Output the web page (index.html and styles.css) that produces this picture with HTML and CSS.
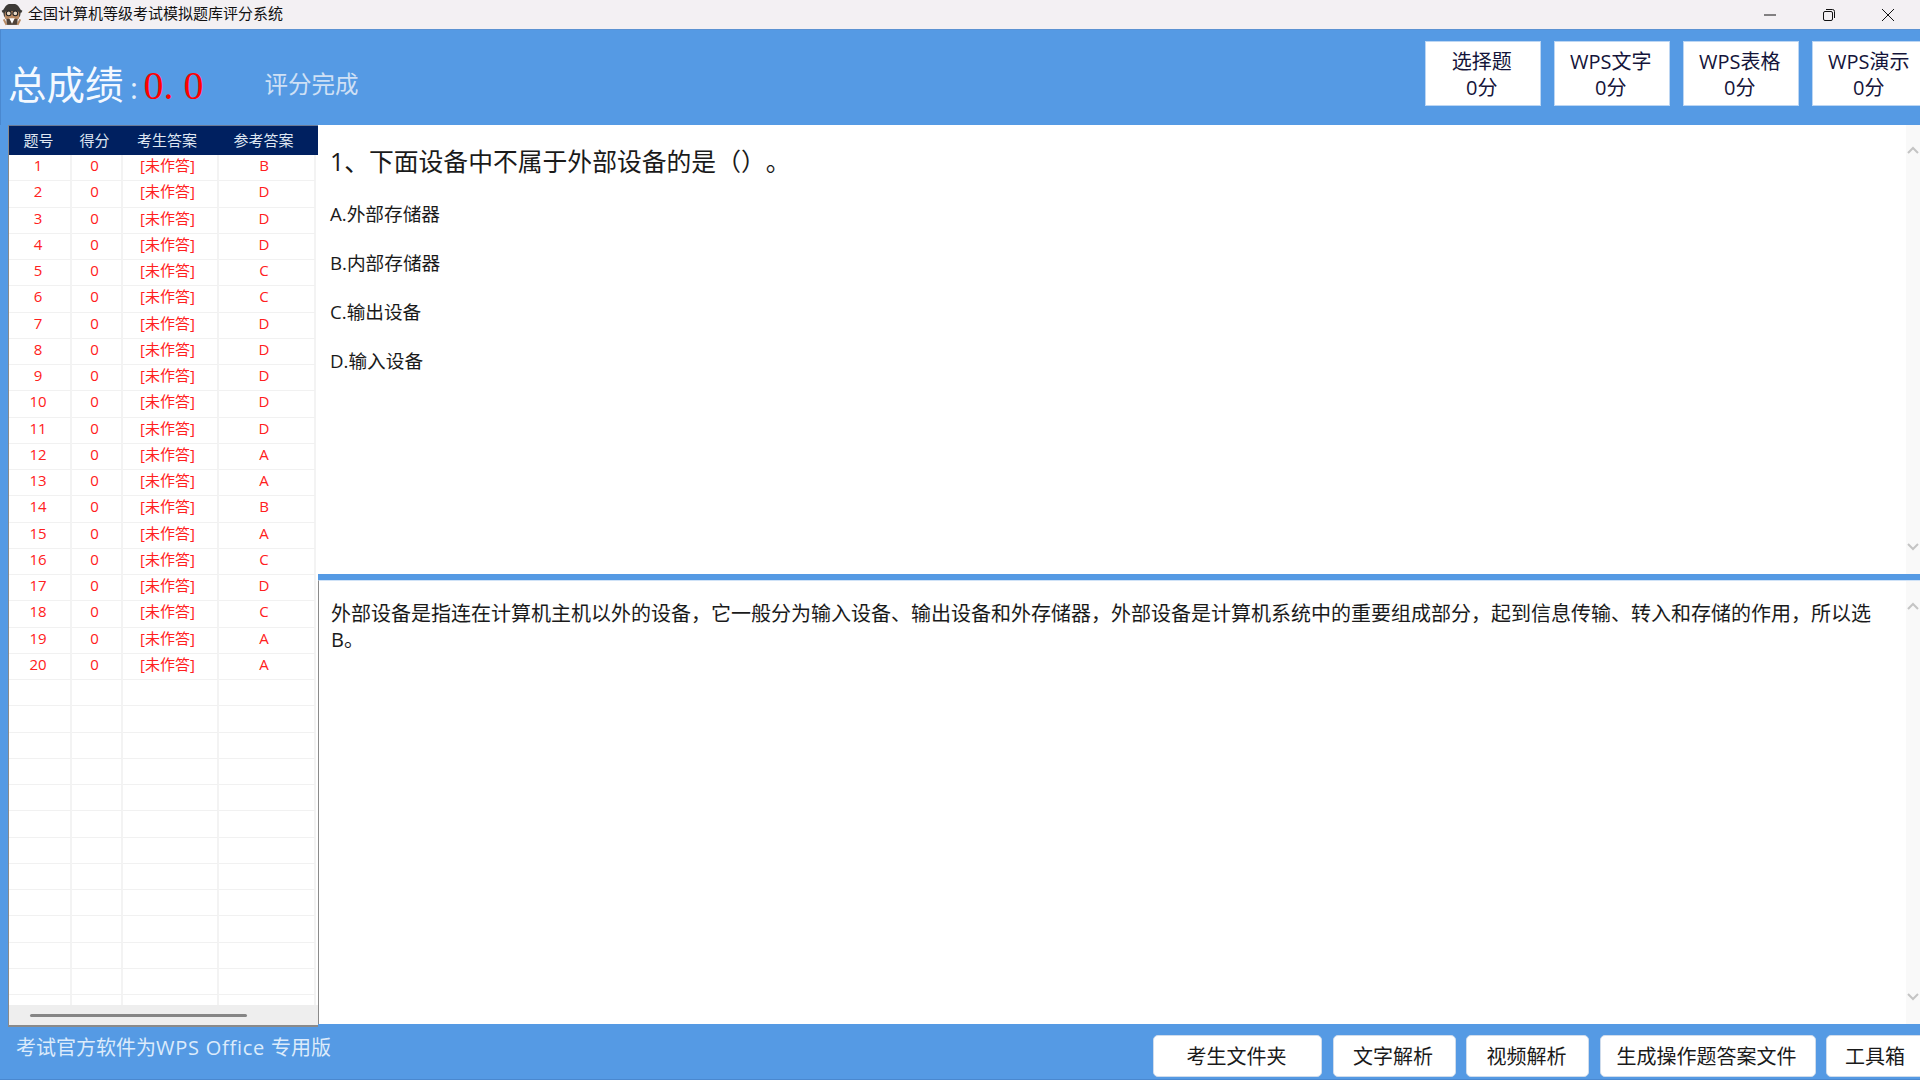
FILE: index.html
```html
<!DOCTYPE html>
<html lang="zh-CN">
<head>
<meta charset="utf-8">
<title>全国计算机等级考试模拟题库评分系统</title>
<link rel="stylesheet" href="styles.css">
</head>
<body>
<div class="window">
  <div class="titlebar">
    <svg class="app-icon" viewBox="0 0 20 20" width="22" height="22">
      <circle cx="10" cy="7.5" r="8" fill="#3d3a36"/>
      <path d="M1 7l2-1M19 7l-2-1" stroke="#3d3a36" stroke-width="2"/>
      <rect x="3.5" y="6.5" width="13" height="7.5" rx="2" fill="#b98a62"/>
      <circle cx="7" cy="8.5" r="2.2" fill="#e8d8c4" stroke="#222" stroke-width="1"/>
      <circle cx="13" cy="8.5" r="2.2" fill="#e8d8c4" stroke="#222" stroke-width="1"/>
      <path d="M5 13.5h10V19H5z" fill="#4f4237"/>
      <path d="M7.5 13l2.5 5 2.5-5z" fill="#fff"/>
      <path d="M2.5 14l2.5 5M17.5 14L15 19" stroke="#b98a62" stroke-width="1.8"/>
    </svg>
    <span class="app-title">全国计算机等级考试模拟题库评分系统</span>
    <div class="win-controls">
      <svg viewBox="0 0 14 14" width="14" height="14"><path d="M1 7h12" stroke="#111" stroke-width="1" fill="none"/></svg>
      <svg viewBox="0 0 14 14" width="14" height="14"><rect x="1.5" y="3.5" width="9" height="9" rx="1.5" stroke="#111" fill="none"/><path d="M4 1.5h6.5a2 2 0 0 1 2 2V10" stroke="#111" fill="none"/></svg>
      <svg viewBox="0 0 14 14" width="14" height="14"><path d="M1 1l12 12M13 1L1 13" stroke="#111" stroke-width="1" fill="none"/></svg>
    </div>
  </div>

  <header class="topbar">
    <div class="score">
      <span class="score-label">总成绩</span><span class="score-colon">:</span><span class="score-value">0. 0</span>
      <span class="score-status">评分完成</span>
    </div>
    <div class="score-cards">
      <div class="card">选择题<br>0分</div>
      <div class="card">WPS文字<br>0分</div>
      <div class="card">WPS表格<br>0分</div>
      <div class="card">WPS演示<br>0分</div>
    </div>
  </header>

  <main class="main">
    <section class="table-panel">
      <div class="thead">
        <span>题号</span><span>得分</span><span>考生答案</span><span>参考答案</span>
      </div>
      <div class="tbody">
        <div class="row"><span>1</span><span>0</span><span>[未作答]</span><span>B</span></div>
        <div class="row"><span>2</span><span>0</span><span>[未作答]</span><span>D</span></div>
        <div class="row"><span>3</span><span>0</span><span>[未作答]</span><span>D</span></div>
        <div class="row"><span>4</span><span>0</span><span>[未作答]</span><span>D</span></div>
        <div class="row"><span>5</span><span>0</span><span>[未作答]</span><span>C</span></div>
        <div class="row"><span>6</span><span>0</span><span>[未作答]</span><span>C</span></div>
        <div class="row"><span>7</span><span>0</span><span>[未作答]</span><span>D</span></div>
        <div class="row"><span>8</span><span>0</span><span>[未作答]</span><span>D</span></div>
        <div class="row"><span>9</span><span>0</span><span>[未作答]</span><span>D</span></div>
        <div class="row"><span>10</span><span>0</span><span>[未作答]</span><span>D</span></div>
        <div class="row"><span>11</span><span>0</span><span>[未作答]</span><span>D</span></div>
        <div class="row"><span>12</span><span>0</span><span>[未作答]</span><span>A</span></div>
        <div class="row"><span>13</span><span>0</span><span>[未作答]</span><span>A</span></div>
        <div class="row"><span>14</span><span>0</span><span>[未作答]</span><span>B</span></div>
        <div class="row"><span>15</span><span>0</span><span>[未作答]</span><span>A</span></div>
        <div class="row"><span>16</span><span>0</span><span>[未作答]</span><span>C</span></div>
        <div class="row"><span>17</span><span>0</span><span>[未作答]</span><span>D</span></div>
        <div class="row"><span>18</span><span>0</span><span>[未作答]</span><span>C</span></div>
        <div class="row"><span>19</span><span>0</span><span>[未作答]</span><span>A</span></div>
        <div class="row"><span>20</span><span>0</span><span>[未作答]</span><span>A</span></div>
        <div class="row"><span></span><span></span><span></span><span></span></div>
        <div class="row"><span></span><span></span><span></span><span></span></div>
        <div class="row"><span></span><span></span><span></span><span></span></div>
        <div class="row"><span></span><span></span><span></span><span></span></div>
        <div class="row"><span></span><span></span><span></span><span></span></div>
        <div class="row"><span></span><span></span><span></span><span></span></div>
        <div class="row"><span></span><span></span><span></span><span></span></div>
        <div class="row"><span></span><span></span><span></span><span></span></div>
        <div class="row"><span></span><span></span><span></span><span></span></div>
        <div class="row"><span></span><span></span><span></span><span></span></div>
        <div class="row"><span></span><span></span><span></span><span></span></div>
        <div class="row"><span></span><span></span><span></span><span></span></div>
        <div class="row"><span></span><span></span><span></span><span></span></div>
      </div>
      <div class="hscroll"><div class="hthumb"></div></div>
    </section>

    <div class="content">
      <section class="question">
        <div class="question-body">
          <h1 class="q-title">1、下面设备中不属于外部设备的是（）。</h1>
          <p class="q-option">A.外部存储器</p>
          <p class="q-option">B.内部存储器</p>
          <p class="q-option">C.输出设备</p>
          <p class="q-option">D.输入设备</p>
        </div>
        <div class="vscroll">
          <svg viewBox="0 0 14 10" width="14" height="10"><path d="M2 8l5-5 5 5" stroke="#c4c4c4" stroke-width="2" fill="none"/></svg>
          <svg viewBox="0 0 14 10" width="14" height="10"><path d="M2 2l5 5 5-5" stroke="#c4c4c4" stroke-width="2" fill="none"/></svg>
        </div>
      </section>
      <section class="analysis">
        <p class="analysis-body">外部设备是指连在计算机主机以外的设备，它一般分为输入设备、输出设备和外存储器，外部设备是计算机系统中的重要组成部分，起到信息传输、转入和存储的作用，所以选B。</p>
        <div class="vscroll vscroll-b">
          <svg viewBox="0 0 14 10" width="14" height="10"><path d="M2 8l5-5 5 5" stroke="#c4c4c4" stroke-width="2" fill="none"/></svg>
          <svg viewBox="0 0 14 10" width="14" height="10"><path d="M2 2l5 5 5-5" stroke="#c4c4c4" stroke-width="2" fill="none"/></svg>
        </div>
      </section>
    </div>
  </main>

  <footer class="footer">
    <span class="footer-note">考试官方软件为<span class="footer-latin">WPS Office </span>专用版</span>
    <div class="footer-actions">
      <button class="btn btn-folder">考生文件夹</button>
      <button class="btn btn-mid">文字解析</button>
      <button class="btn btn-mid">视频解析</button>
      <button class="btn btn-gen">生成操作题答案文件</button>
      <button class="btn btn-tool">工具箱</button>
    </div>
  </footer>
</div>
</body>
</html>
```

FILE: styles.css
```css
* { box-sizing: border-box; }
html, body { margin: 0; padding: 0; }
body {
  width: 1920px;
  height: 1080px;
  overflow: hidden;
  font-family: "Open Sans", "Noto Sans CJK SC", sans-serif;
  color: #1a1a1a;
}
.window {
  width: 1920px;
  height: 1080px;
  display: flex;
  flex-direction: column;
  background: #559ae4;
  overflow: hidden;
}

/* title bar */
.titlebar {
  height: 30px;
  flex: none;
  display: flex;
  align-items: center;
  background: #f3f0f3;
  border-bottom: 1px solid #5b92d2;
  padding-left: 1px;
}
.app-icon { flex: none; }
.app-title {
  margin-left: 5px;
  font-size: 15px;
  line-height: 27px;
  height: 29px;
  color: #111;
  white-space: nowrap;
}
.win-controls {
  margin-left: auto;
  display: flex;
  gap: 45px;
  padding-right: 25px;
}

/* top bar */
.topbar {
  height: 95px;
  flex: none;
  display: flex;
  justify-content: space-between;
  padding-left: 7px;
  border-left: 1px solid #4a88cf;
}
.score {
  display: flex;
  align-items: baseline;
  padding-top: 26px;
  white-space: nowrap;
}
.score-label { font-size: 38.5px; line-height: 56px; color: #f4f9ff; }
.score-colon { font-size: 30px; line-height: 56px; color: #e4effb; margin-left: 6.5px; }
.score-value {
  font-family: "Liberation Serif", serif;
  font-size: 40px;
  line-height: 56px;
  color: #ff0000;
  margin-left: 5.5px;
}
.score-status {
  align-self: flex-start;
  font-size: 23.5px;
  line-height: 56px;
  color: #cfe0f5;
  margin-left: 61px;
}
.score-cards {
  display: flex;
  gap: 12.5px;
  padding-top: 11px;
  margin-right: -8px;
}
.card {
  width: 116.5px;
  height: 65px;
  background: #fff;
  border: 1px solid #bcd6f3;
  text-align: center;
  font-size: 20px;
  line-height: 26px;
  padding: 7px 2px 0 0;
  color: #14143a;
  white-space: nowrap;
}

/* main */
.main {
  height: 902px;
  flex: none;
  display: flex;
}
.table-panel {
  width: 310px;
  margin-left: 8px;
  flex: none;
  display: flex;
  flex-direction: column;
  background: #fff;
  border-left: 1px solid #8a8a8a;
  border-bottom: 2px solid #8a8a8a;
}
.thead, .row {
  display: grid;
  grid-template-columns: 63px 51px 96px 97px;
}
.thead {
  height: 30px;
  flex: none;
  background: #002060;
  border-top: 1px solid #6a7a96;
  color: #dfe6f2;
  font-size: 15px;
  line-height: 29px;
  text-align: center;
}
.thead span { padding-right: 8px; }
.thead span:first-child { padding-right: 4px; }
.thead span:nth-child(2) { padding-right: 6px; }
.tbody {
  flex: 1;
  min-height: 0;
  overflow: hidden;
}
.row {
  height: 26.25px;
  color: #ff2020;
  font-size: 15px;
  line-height: 21px;
  text-align: center;
}
.row span {
  border-right: 2px solid #f3f3f3;
  border-bottom: 1px solid #f1f1f1;
  padding-right: 5px;
}
.row span:first-child { padding-right: 3px; }
.row span:nth-child(2) { padding-right: 4px; }
.hscroll {
  height: 20px;
  flex: none;
  background: #eeeeee;
  padding: 9px 0 0 21px;
}
.hthumb {
  width: 217px;
  height: 3px;
  border-radius: 2px;
  background: #858585;
}

/* right content */
.content {
  flex: 1;
  min-width: 0;
  display: flex;
  flex-direction: column;
  margin-bottom: 3px;
}
.question {
  height: 449px;
  flex: none;
  display: flex;
  background: #fff;
}
.question-body {
  flex: 1;
  padding: 19px 0 0 12px;
}
.q-title {
  margin: 0;
  font-size: 24.8px;
  font-weight: 400;
  line-height: 34px;
  color: #1a1a1a;
  text-spacing-trim: space-all;
  font-feature-settings: "chws" 0, "halt" 0, "palt" 0;
}
.q-option {
  margin: 0;
  font-size: 18.67px;
  line-height: 26px;
  color: #1a1a1a;
}
.q-title + .q-option { margin-top: 23px; }
.q-option + .q-option { margin-top: 23px; }
.vscroll {
  width: 14px;
  flex: none;
  background: #f9f9f9;
  display: flex;
  flex-direction: column;
  justify-content: space-between;
  padding: 20px 0 22px;
}
.analysis {
  flex: 1;
  min-height: 0;
  margin-top: 6px;
  display: flex;
  background: #fff;
  border-left: 1px solid #8a8a8a;
  border-top: 1px solid #cfe2f7;
}
.analysis-body {
  flex: 1;
  margin: 0;
  padding: 20px 12px 0 12px;
  font-size: 20px;
  line-height: 26px;
  color: #1a1a1a;
}
.vscroll-b { padding: 20px 0 22px; }

/* footer */
.footer {
  flex: 1;
  display: flex;
  justify-content: space-between;
  padding: 8px 0 0 16px;
  border-bottom: 1px solid #4a88cf;
}
.footer-note {
  font-size: 20px;
  line-height: 26px;
  color: #dcebfb;
  white-space: nowrap;
}
.footer-latin { letter-spacing: .75px; }
.footer-actions {
  display: flex;
  gap: 10.5px;
  margin-right: -16px;
}
.btn {
  height: 42px;
  background: #fff;
  border: 1px solid #cfdcec;
  border-radius: 5px;
  font: inherit;
  font-size: 20px;
  line-height: 26px;
  color: #1a1a1a;
  padding: 2px 2px 0 0;
}
.btn-folder { width: 169px; }
.btn-mid { width: 123px; }
.btn-gen { width: 216px; }
.btn-tool { width: 110px; text-align: left; padding-left: 18px; }
```
